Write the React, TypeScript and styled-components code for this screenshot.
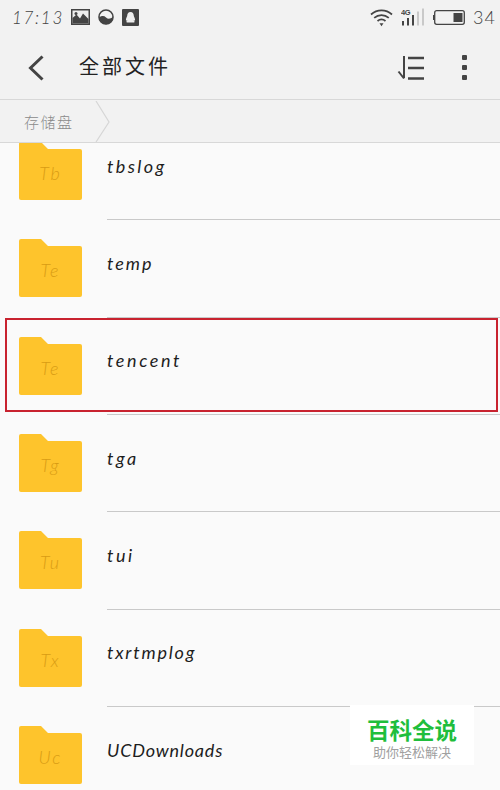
import React from 'react'
import styled, { createGlobalStyle } from 'styled-components'

const HAND_FONT = 'Lato, "Noto Sans CJK SC", sans-serif'
const CJK_FONT = '"Noto Sans CJK SC", sans-serif'
const ROW_HEIGHT = 97.36

const folders = [
  { label: 'Tb', name: 'tbslog', spacing: 2.4 },
  { label: 'Te', name: 'temp', spacing: 2 },
  { label: 'Te', name: 'tencent', spacing: 2.6 },
  { label: 'Tg', name: 'tga', spacing: 2.6 },
  { label: 'Tu', name: 'tui', spacing: 2.6 },
  { label: 'Tx', name: 'txrtmplog', spacing: 1.8 },
  { label: 'Uc', name: 'UCDownloads', spacing: 0.8 }
]

const App = (): JSX.Element => {
  return (
    <Screen>
      <GlobalStyle />
      <TopArea>
        <StatusBar>
          <StatusLeft>
            <Clock>17:13</Clock>
            <svg width="19" height="16" viewBox="0 0 19 16">
              <rect width="19" height="16" fill="#444" />
              <rect x="1.5" y="1.5" width="16" height="13" fill="#eee" />
              <path d="M1.5 14.5V9l4-3.5 3.5 4 3-5 5.5 5.5v4.5z" fill="#444" />
              <circle cx="5" cy="4.6" r="1.5" fill="#444" />
            </svg>
            <svg width="16" height="16" viewBox="0 0 16 16">
              <circle cx="8" cy="8" r="7" fill="#f2f2f2" stroke="#444" strokeWidth="1.6" />
              <path d="M1 8.4c3-1.8 5-1.8 7 0s4 1.6 7-.4A7 7 0 0 1 1 8.4z" fill="#444" />
            </svg>
            <svg width="17" height="17" viewBox="0 0 17 17">
              <rect width="17" height="17" rx="1" fill="#444" />
              <path d="M8.5 3c2.4 0 3.3 1.9 3.3 3.8 0 .7 1.3 2.6 1.3 4.3 0 1-.7.6-1.3-.2 0 1 .5 1.3 1 1.8 0 .8-2.3 1.1-4.3.7-2 .4-4.3.1-4.3-.7.5-.5 1-.8 1-1.8-.6.8-1.3 1.2-1.3.2 0-1.7 1.3-3.6 1.3-4.3C5.2 4.9 6.1 3 8.5 3z" fill="#eee" />
            </svg>
          </StatusLeft>
          <StatusRight>
            <svg width="23" height="19" viewBox="0 0 23 19" fill="none" stroke="#444">
              <path d="M1 6.5c6-5.5 15-5.5 21 0" strokeWidth="1.7" />
              <path d="M4.2 9.8c4.2-3.7 10.4-3.7 14.6 0" strokeWidth="1.7" />
              <path d="M7.5 13c2.4-2 5.6-2 8 0" strokeWidth="1.7" />
              <path d="M9.5 15.2h4l-2 3z" fill="#444" stroke="none" />
            </svg>
            <svg width="24" height="18" viewBox="0 0 24 18">
              <text x="0" y="7" fontFamily="Liberation Sans, sans-serif" fontWeight="700" fontSize="7.5" letterSpacing="-0.3" fill="#444">4G</text>
              <rect x="1" y="13" width="2" height="4.5" fill="#444" />
              <rect x="6" y="10" width="2" height="7.5" fill="#444" />
              <rect x="11" y="7" width="2" height="10.5" fill="#444" />
              <rect x="16" y="3.5" width="2" height="14" fill="#c9c9c9" />
              <rect x="21" y="0.5" width="2" height="17" fill="#c9c9c9" />
            </svg>
            <svg width="32" height="15" viewBox="0 0 32 15">
              <rect x="0" y="5" width="1.5" height="5" fill="#444" />
              <rect x="1.7" y="0.7" width="29.6" height="13.6" rx="2" fill="none" stroke="#444" strokeWidth="1.3" />
              <rect x="20.5" y="3" width="9" height="9" fill="#444" />
            </svg>
            <BatteryText>34</BatteryText>
          </StatusRight>
        </StatusBar>
        <Header>
          <BackIcon width="16" height="26" viewBox="0 0 16 26">
            <path d="M14.5 1.5 2.5 13l12 11.5" fill="none" stroke="#444" strokeWidth="3" />
          </BackIcon>
          <Title>全部文件</Title>
          <SortIcon width="28" height="26" viewBox="0 0 28 26" fill="none" stroke="#444">
            <path d="M7 1v22" strokeWidth="2" />
            <path d="M1.5 16.5 7 23.5" strokeWidth="2" />
            <path d="M11 3h16M11 13h16M11 23.5h16" strokeWidth="2.5" />
          </SortIcon>
          <MoreDots>
            <Dot />
            <Dot />
            <Dot />
          </MoreDots>
        </Header>
        <Breadcrumb>
          <CrumbText>存储盘</CrumbText>
          <svg width="16" height="41" viewBox="0 0 16 41">
            <path d="M1 0 14 21 1 41" fill="none" stroke="#d6d6d6" strokeWidth="1.2" />
          </svg>
        </Breadcrumb>
      </TopArea>
      <ListViewport>
        <List>
          {folders.map(folder =>
            <Row key={folder.name}>
              <Folder>
                <FolderShape width="63" height="58" viewBox="0 0 63 58">
                  <path d="M2 0h20l7 7h32a2 2 0 0 1 2 2v47a2 2 0 0 1-2 2H2a2 2 0 0 1-2-2V2a2 2 0 0 1 2-2z" fill="#fec42c" />
                </FolderShape>
                <FolderLabel>{folder.label}</FolderLabel>
              </Folder>
              <RowBody>
                <FileName $spacing={folder.spacing}>{folder.name}</FileName>
              </RowBody>
            </Row>
          )}
        </List>
      </ListViewport>
      <Highlight />
      <Watermark>
        <WatermarkTitle>百科全说</WatermarkTitle>
        <WatermarkSub>助你轻松解决</WatermarkSub>
      </Watermark>
    </Screen>
  )
}

export default App

const GlobalStyle = createGlobalStyle`
  html, body {
    margin: 0;
    padding: 0;
    background: #fafafa;
  }
`

const Screen = styled.div`
  width: 500px;
  height: 790px;
  position: relative;
  overflow: hidden;
  background: #fafafa;
  font-family: ${HAND_FONT};
`

const TopArea = styled.div`
  background: #f2f2f2;
  height: 143px;
  display: flex;
  flex-direction: column;
`

const StatusBar = styled.div`
  height: 34px;
  display: flex;
  justify-content: space-between;
  align-items: center;
  padding: 0 8px 0 12px;
`

const StatusLeft = styled.div`
  display: flex;
  align-items: center;
  gap: 8px;
`

const StatusRight = styled.div`
  display: flex;
  align-items: center;
  gap: 8px;
`

const Clock = styled.span`
  width: 51px;
  font-size: 17px;
  font-weight: 300;
  font-style: italic;
  letter-spacing: 1.7px;
  white-space: nowrap;
  color: #444;
`

const BatteryText = styled.span`
  width: 19px;
  font-size: 18px;
  font-weight: 300;
  letter-spacing: 1px;
  color: #444;
`

const Header = styled.div`
  height: 66px;
  display: flex;
  align-items: center;
  padding: 2px 33px 0 28px;
  box-sizing: border-box;
  border-bottom: 1px solid #d8d8d8;
`

const BackIcon = styled.svg`
  flex: none;
`

const Title = styled.div`
  margin: -4px 0 0 35px;
  flex: 1;
  font-family: ${CJK_FONT};
  font-weight: 400;
  font-size: 20px;
  letter-spacing: 3px;
  color: #222;
`

const SortIcon = styled.svg`
  flex: none;
  margin-right: 37px;
`

const MoreDots = styled.div`
  display: flex;
  flex-direction: column;
  gap: 5px;
`

const Dot = styled.span`
  width: 5px;
  height: 5px;
  border-radius: 1px;
  background: #444;
`

const Breadcrumb = styled.div`
  flex: 1;
  display: flex;
  align-items: center;
  padding-left: 24px;
  border-bottom: 1px solid #d8d8d8;
`

const CrumbText = styled.span`
  width: 71px;
  font-family: ${CJK_FONT};
  font-weight: 300;
  font-size: 15px;
  letter-spacing: 1.5px;
  color: #8a8a8a;
`

const ListViewport = styled.div`
  height: 647px;
  overflow: hidden;
`

const List = styled.div`
  margin-top: -20px;
  display: grid;
  grid-auto-rows: ${ROW_HEIGHT}px;
`

const Row = styled.div`
  display: flex;
  padding-left: 19px;
`

const Folder = styled.div`
  position: relative;
  flex: none;
  width: 63px;
  height: 58px;
  margin-top: 19px;
  display: flex;
  align-items: center;
  justify-content: center;
  padding-top: 4px;
  box-sizing: border-box;
`

const FolderShape = styled.svg`
  position: absolute;
  inset: 0;
`

const FolderLabel = styled.span`
  position: relative;
  font-size: 18px;
  font-weight: 300;
  font-style: italic;
  letter-spacing: 2px;
  color: #d99c14;
`

const RowBody = styled.div`
  flex: 1;
  margin-left: 25px;
  border-bottom: 1px solid #c9c9c9;
  display: flex;
  align-items: center;
  padding-bottom: 11px;
`

const FileName = styled.span<{ $spacing: number }>`
  font-size: 18px;
  font-style: italic;
  letter-spacing: ${({ $spacing }) => $spacing}px;
  color: #1d1d1d;
`

const Highlight = styled.div`
  position: absolute;
  left: 5px;
  top: 318px;
  width: 493px;
  height: 94px;
  box-sizing: border-box;
  border: 2px solid #c8222f;
  pointer-events: none;
`

const Watermark = styled.div`
  position: absolute;
  left: 350px;
  top: 705px;
  width: 124px;
  height: 60px;
  padding-top: 6px;
  box-sizing: border-box;
  background: #ffffff;
  display: flex;
  flex-direction: column;
  align-items: center;
  justify-content: center;
  font-family: ${CJK_FONT};
`

const WatermarkTitle = styled.div`
  font-size: 22.5px;
  line-height: 28px;
  font-weight: 700;
  color: #1fbe3c;
`

const WatermarkSub = styled.div`
  font-size: 13px;
  line-height: 18px;
  color: #a0a0a0;
`
